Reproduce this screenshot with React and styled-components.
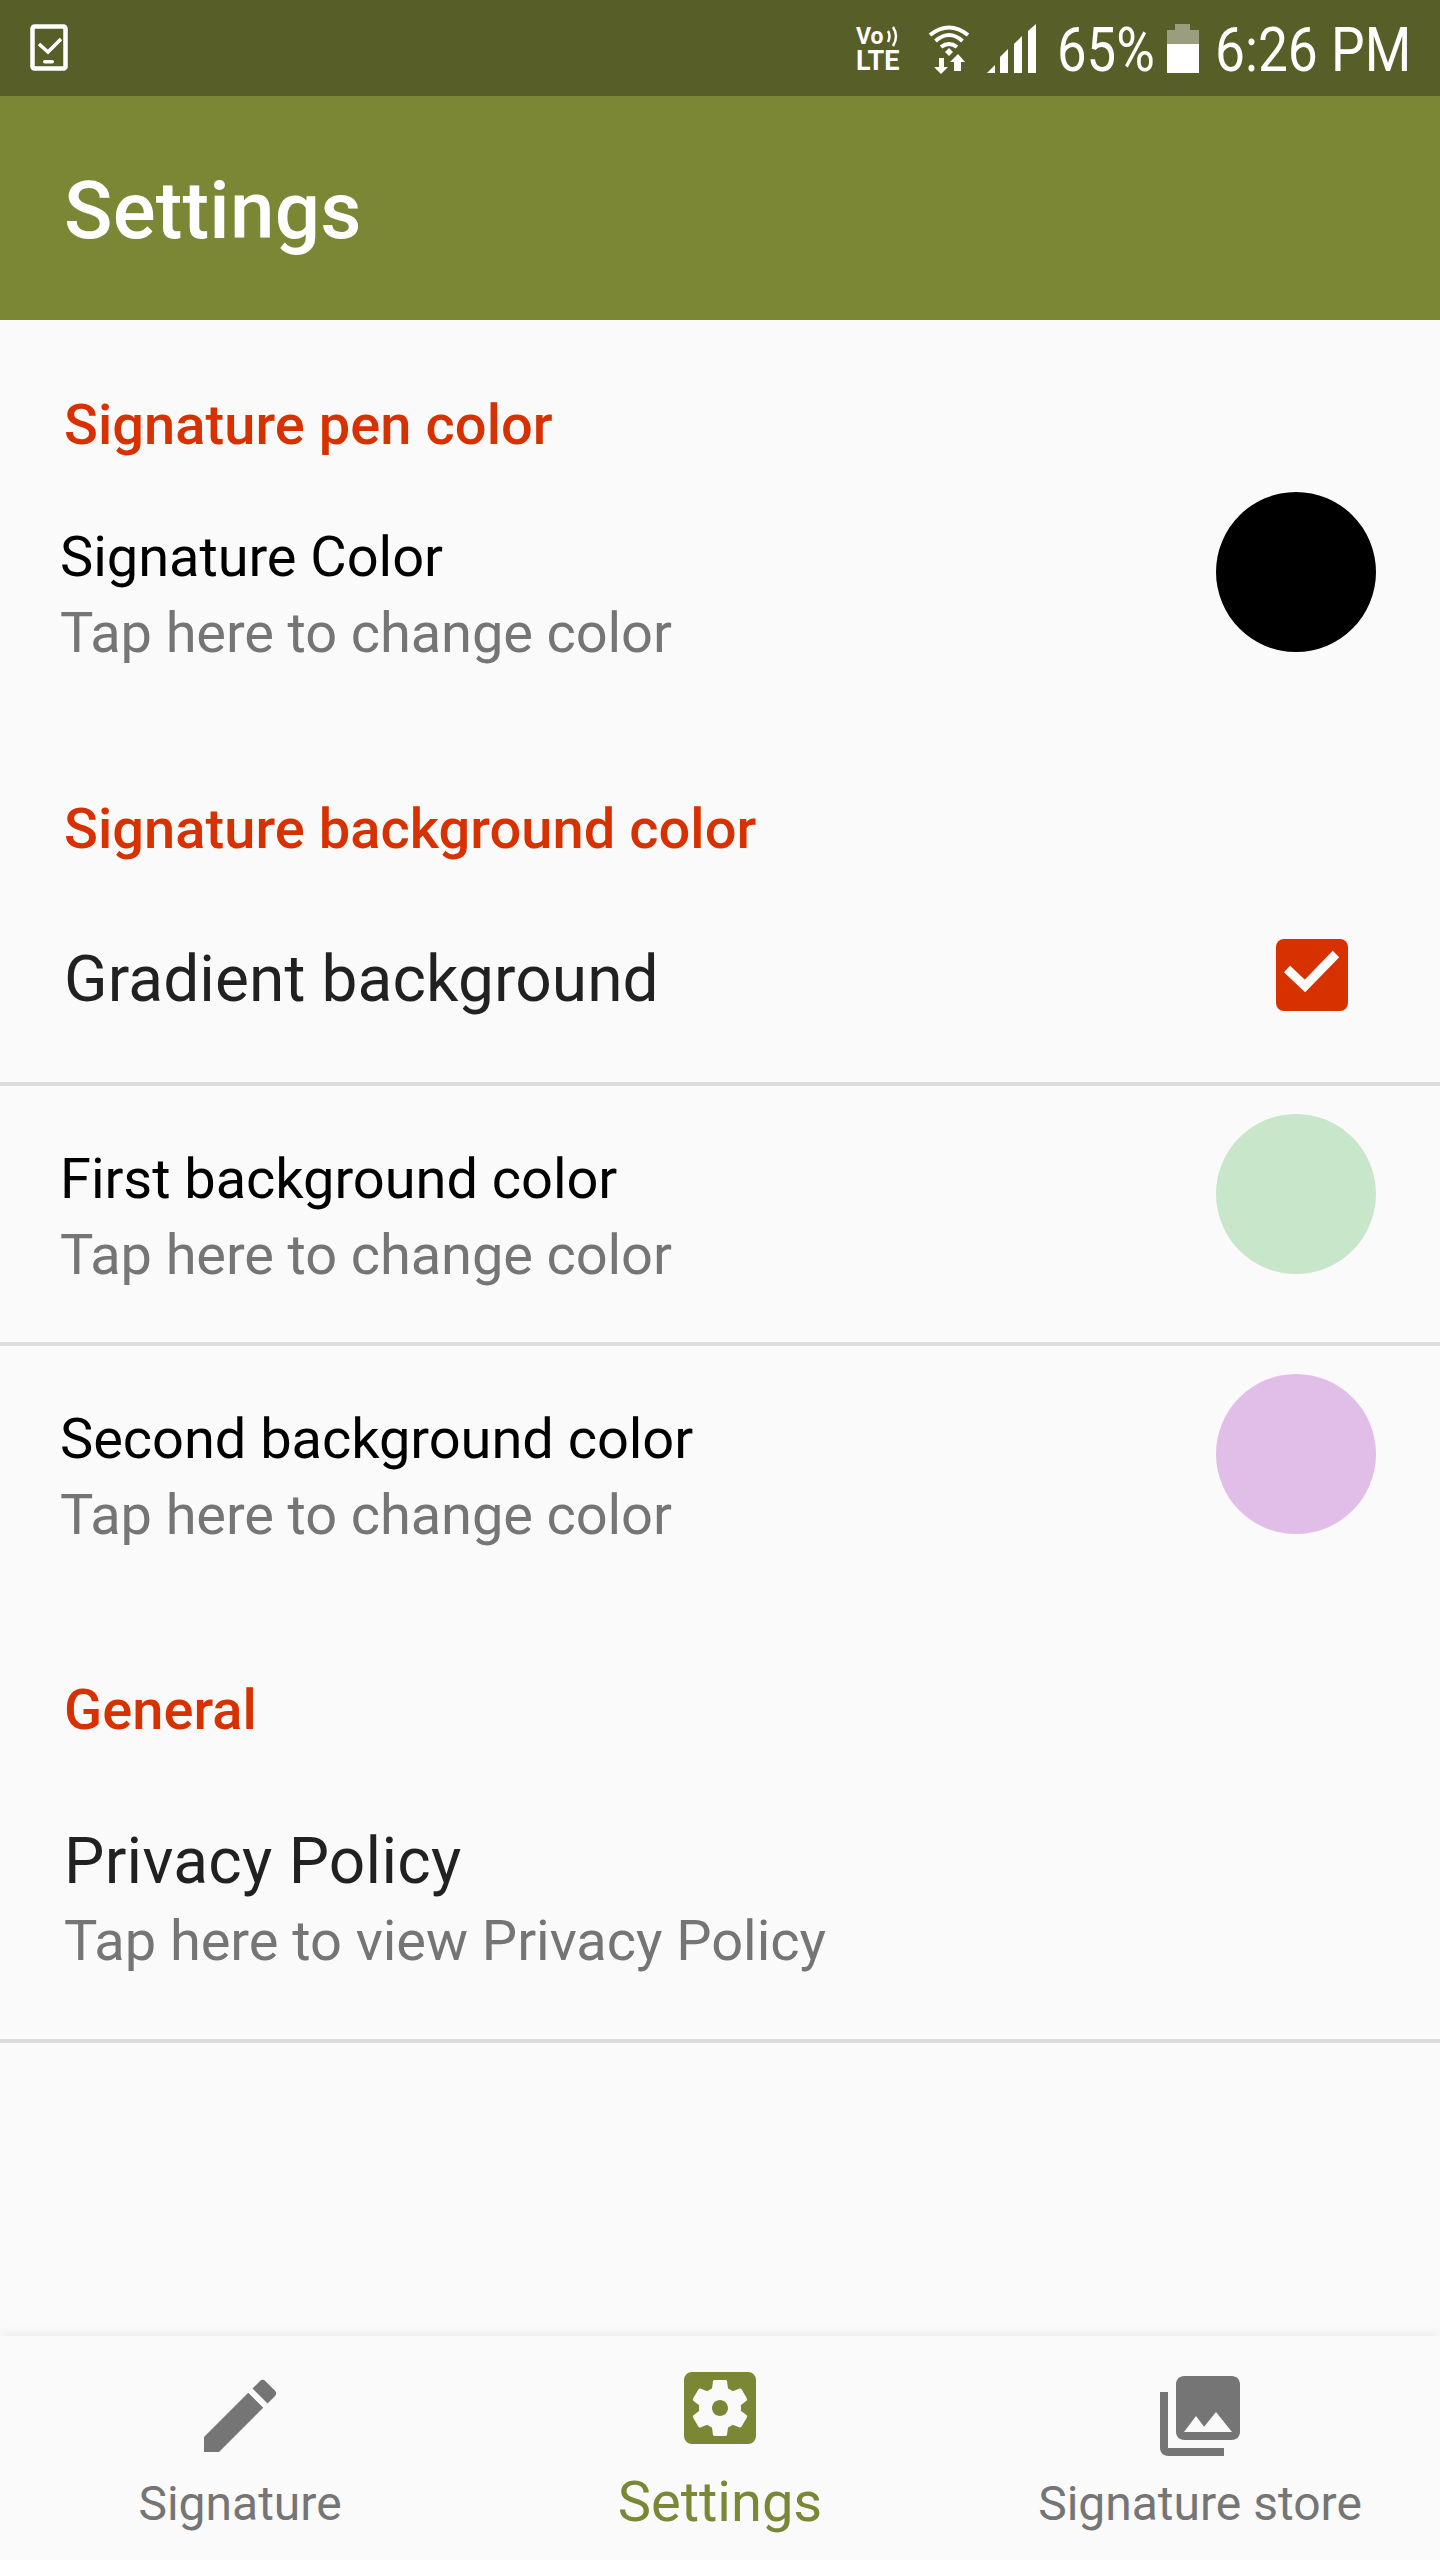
import React from 'react';
import styled, { createGlobalStyle } from 'styled-components';
import { MdEdit, MdSettingsApplications, MdPhotoLibrary } from 'react-icons/md';

const Global = createGlobalStyle`
  html, body { margin: 0; padding: 0; background: #fafafa; }
  * { box-sizing: border-box; }
  body { font-family: Roboto, "Liberation Sans", sans-serif; }
`;

const Screen = styled.div`
  width: 1440px;
  height: 2560px;
  display: flex;
  flex-direction: column;
  background: #fafafa;
  overflow: hidden;
`;
const StatusBar = styled.div`
  height: 96px;
  flex: none;
  background: #575e28;
  display: flex;
  align-items: flex-start;
  padding: 24px 35px 0 30px;
  color: #fff;
`;
const StatusRight = styled.div`
  margin-left: auto;
  display: flex;
  align-items: flex-start;
`;
const StatusIcon = styled.svg`
  display: block;
  flex: none;
  margin-left: ${p => p.$ml || 0}px;
`;
const StatusText = styled.span`
  display: block;
  flex: none;
  width: ${p => p.$w}px;
  margin-left: ${p => p.$ml || 0}px;
  font-size: 62px;
  line-height: 52px;
  font-weight: 400;
  white-space: nowrap;
  transform: scaleX(${p => p.$sx});
  transform-origin: left center;
`;
const VoLteBox = styled.div`
  width: 48px;
  flex: none;
  display: flex;
  flex-direction: column;
  font-weight: 700;
`;
const VoLine = styled.div`
  display: flex;
  align-items: center;
  height: 25px;
  font-size: 23px;
  line-height: 25px;
`;
const LteLine = styled.div`
  height: 25px;
  font-size: 27px;
  line-height: 25px;
  letter-spacing: 0;
`;
const AppBar = styled.header`
  height: 224px;
  flex: none;
  background: #7c8735;
  display: flex;
  align-items: center;
  padding: 6px 64px 0;
`;
const Title = styled.h1`
  margin: 0;
  color: #fff;
  font-size: 80px;
  line-height: 100px;
  font-weight: 500;
  letter-spacing: 0.2px;
`;
const Content = styled.main`
  flex: 1;
  display: flex;
  flex-direction: column;
  padding-top: 73px;
`;
const SectionHead = styled.h2`
  margin: 0;
  padding: 0 64px;
  color: #d83100;
  font-size: 56px;
  line-height: 64px;
  font-weight: 500;
  letter-spacing: 0.05px;
`;
const ColorRow = styled.div`
  height: ${p => p.$h}px;
  margin-top: ${p => p.$mt || 0}px;
  padding: 28px 64px 0 60px;
  display: flex;
  justify-content: space-between;
  align-items: flex-start;
  border-bottom: ${p => (p.$line ? '4px solid #dcdcdc' : 'none')};
`;
const RowText = styled.div`
  padding-top: 27px;
`;
const RowTitle = styled.div`
  color: #000;
  font-size: 56px;
  line-height: 76px;
  letter-spacing: -0.06px;
`;
const RowSub = styled.div`
  color: #757575;
  font-size: 56px;
  line-height: 76px;
  letter-spacing: -0.12px;
`;
const Swatch = styled.div`
  width: 160px;
  height: 160px;
  border-radius: 50%;
  background: ${p => p.$c};
`;
const CheckRow = styled.div`
  height: 225px;
  padding: 7px 92px 0 64px;
  display: flex;
  justify-content: space-between;
  align-items: center;
  border-bottom: 4px solid #dcdcdc;
`;
const BigLabel = styled.div`
  color: rgba(0, 0, 0, 0.87);
  font-size: 64px;
  line-height: 80px;
  letter-spacing: ${p => p.$ls || 0}px;
  padding-top: ${p => p.$pt || 0}px;
`;
const CheckBox = styled.div`
  width: 72px;
  height: 72px;
  border-radius: 8px;
  background: #d83100;
  svg { display: block; }
`;
const PolicyRow = styled.div`
  margin-top: 80px;
  padding: 0 64px;
  height: 221px;
  border-bottom: 4px solid #dcdcdc;
`;
const PolicySub = styled.div`
  color: #757575;
  font-size: 56px;
  line-height: 76px;
  padding-top: 1px;
  letter-spacing: -0.05px;
`;
const BottomNav = styled.nav`
  height: 224px;
  flex: none;
  display: grid;
  grid-template-columns: repeat(3, 480px);
  background: #fafafa;
  box-shadow: 0 -2px 10px rgba(0, 0, 0, 0.07);
`;
const NavItem = styled.div`
  display: flex;
  flex-direction: column;
  align-items: center;
  color: ${p => (p.$active ? '#7c8735' : '#757575')};
  padding-top: ${p => (p.$active ? 24 : 32)}px;
  svg { display: block; flex: none; }
`;
const NavLabel = styled.span`
  font-size: ${p => (p.$active ? 56 : 48)}px;
  line-height: 64px;
  margin-top: ${p => (p.$active ? 14 : 8)}px;
  white-space: nowrap;
`;

const DeviceCheck = () => (
  <StatusIcon width="40" height="48" viewBox="0 0 40 48">
    <rect x="2.5" y="2.5" width="33" height="42" rx="2" fill="none" stroke="#fff" strokeWidth="4.5" />
    <path d="M9 20l9 8 13-13" fill="none" stroke="#fff" strokeWidth="3.5" />
    <rect x="13" y="36" width="11" height="3.5" rx="1.7" fill="#fff" />
  </StatusIcon>
);
const VoLte = () => (
  <VoLteBox>
    <VoLine>
      Vo
      <StatusIcon $ml={2} width="14" height="25" viewBox="0 0 14 25">
        <path d="M2 7q3 5 0 11M7 3q6 9 0 19" fill="none" stroke="#fff" strokeWidth="2.5" />
      </StatusIcon>
    </VoLine>
    <LteLine>LTE</LteLine>
  </VoLteBox>
);
const WifiData = () => (
  <StatusIcon $ml={24} width="42" height="50" viewBox="0 0 42 50">
    <path d="M2 11Q21-4 40 11M7.500 17Q21 5 34.500 17M13 23q8-6 16 0" fill="none" stroke="#fff" strokeWidth="4" />
    <path d="M21 24l4 4-4 4-4-4z" fill="#fff" />
    <path d="M11 34h5v9h4l-7 7-7-7h5zM26 47V38h-4l8-8 7 8h-4v9z" fill="#fff" />
  </StatusIcon>
);
const Signal = () => (
  <StatusIcon $ml={17} width="50" height="50" viewBox="0 0 50 50">
    <path d="M0 49l8-8v8zM13 49V33l8-8v24zM27 49V20l8-8v37zM41 49V7l8-7v49z" fill="#fff" />
  </StatusIcon>
);
const Battery = () => (
  <StatusIcon $ml={17} width="32" height="50" viewBox="0 0 32 50">
    <path d="M8 0h15v6h9v14H0V6h8z" fill="#fff" opacity=".4" />
    <rect y="20" width="32" height="29" fill="#fff" />
  </StatusIcon>
);

export default function App() {
  return (
    <Screen>
      <Global />
      <StatusBar>
        <DeviceCheck />
        <StatusRight>
          <VoLte />
          <WifiData />
          <Signal />
          <StatusText $w={93} $ml={20} $sx={0.85}>65%</StatusText>
          <Battery />
          <StatusText $w={190} $ml={16} $sx={0.86}>6:26 PM</StatusText>
        </StatusRight>
      </StatusBar>
      <AppBar>
        <Title>Settings</Title>
      </AppBar>
      <Content>
        <SectionHead>Signature pen color</SectionHead>
        <ColorRow $h={333} $mt={7}>
          <RowText>
            <RowTitle>Signature Color</RowTitle>
            <RowSub>Tap here to change color</RowSub>
          </RowText>
          <Swatch $c="#000" />
        </ColorRow>
        <SectionHead>Signature background color</SectionHead>
        <CheckRow>
          <BigLabel $pt={9} $ls={0.1}>Gradient background</BigLabel>
          <CheckBox>
            <svg width="72" height="72" viewBox="0 0 72 72">
              <path d="M11 30l18 17 31-32" fill="none" stroke="#fff" strokeWidth="9" />
            </svg>
          </CheckBox>
        </CheckRow>
        <ColorRow $h={260} $line>
          <RowText>
            <RowTitle>First background color</RowTitle>
            <RowSub>Tap here to change color</RowSub>
          </RowText>
          <Swatch $c="#c8e6c9" />
        </ColorRow>
        <ColorRow $h={332}>
          <RowText>
            <RowTitle>Second background color</RowTitle>
            <RowSub>Tap here to change color</RowSub>
          </RowText>
          <Swatch $c="#e1bee7" />
        </ColorRow>
        <SectionHead>General</SectionHead>
        <PolicyRow>
          <BigLabel $ls={0.25}>Privacy Policy</BigLabel>
          <PolicySub>Tap here to view Privacy Policy</PolicySub>
        </PolicyRow>
      </Content>
      <BottomNav>
        <NavItem>
          <MdEdit size={96} />
          <NavLabel>Signature</NavLabel>
        </NavItem>
        <NavItem $active>
          <MdSettingsApplications size={96} />
          <NavLabel $active>Settings</NavLabel>
        </NavItem>
        <NavItem>
          <MdPhotoLibrary size={96} />
          <NavLabel>Signature store</NavLabel>
        </NavItem>
      </BottomNav>
    </Screen>
  );
}
